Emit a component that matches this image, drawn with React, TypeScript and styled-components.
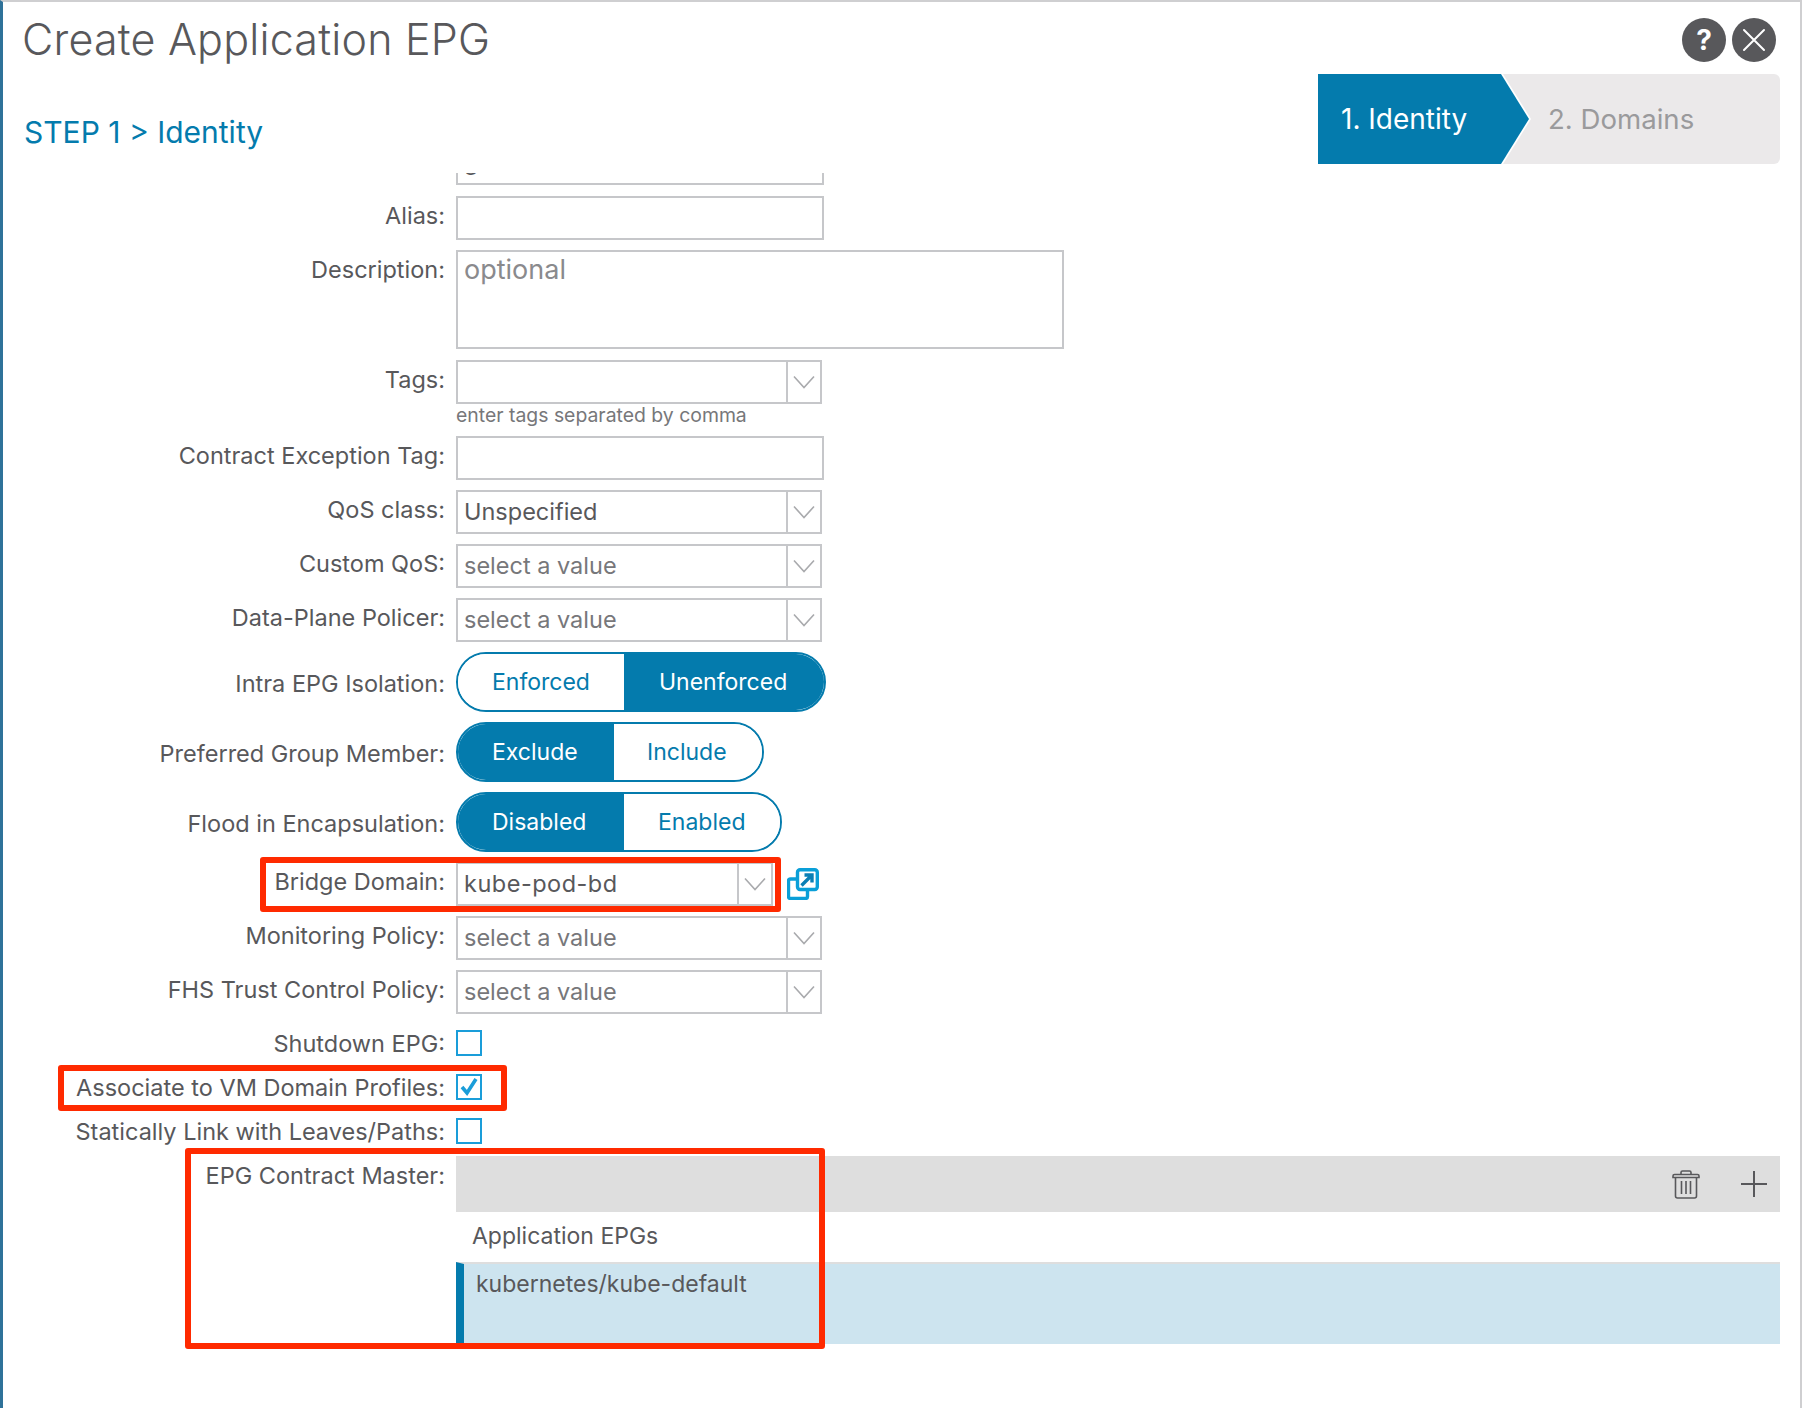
import React from "react";
import styled, { createGlobalStyle } from "styled-components";

const Global = createGlobalStyle`
  html, body { margin: 0; padding: 0; background: #fff; }
  body { font-family: Inter, "Liberation Sans", sans-serif; color: #58585b; }
  * { box-sizing: border-box; }
`;

const Dialog = styled.div`
  position: relative;
  width: 1802px;
  height: 1408px;
  overflow: hidden;
  background: #fff;
  border-top: 2px solid #cfcfd1;
  border-left: 3px solid #2f7299;
  border-right: 2px solid #cfcfd1;
`;

const Header = styled.header`
  display: flex;
  justify-content: space-between;
  height: 171px;
  padding-left: 19px;
`;

const HeadLeft = styled.div`
  display: flex;
  flex-direction: column;
`;

const Title = styled.h1`
  margin: 12px 0 0;
  font-size: 43px;
  line-height: 50px;
  font-weight: 300;
  color: #58585b;
  letter-spacing: 0.2px;
`;

const Step = styled.div`
  margin-top: 50px;
  margin-left: 2px;
  font-size: 30px;
  line-height: 36px;
  font-weight: 400;
  color: #047bad;
`;

const HeadRight = styled.div`
  display: flex;
  flex-direction: column;
  align-items: flex-end;
  width: 462px;
  margin-right: 20px;
  padding-top: 16px;
`;

const RoundButtons = styled.div`
  display: flex;
  gap: 6px;
  margin-right: 4px;
`;

const RoundButton = styled.div`
  display: flex;
  align-items: center;
  justify-content: center;
  width: 44px;
  height: 44px;
  border-radius: 50%;
  background: #58585b;
  color: #fff;
  font-size: 28px;
  font-weight: 700;
`;

const Wizard = styled.div`
  display: flex;
  width: 462px;
  height: 90px;
  margin-top: 12px;
  background: #ebe9ea;
  border-radius: 0 6px 6px 0;
`;

const ActiveEdge = styled.div`
  width: 213px;
  height: 90px;
  background: #fff;
  clip-path: polygon(0 0, 185px 0, 213px 50%, 185px 100%, 0 100%);
`;

const ActiveStep = styled.div`
  display: flex;
  align-items: center;
  width: 211px;
  height: 90px;
  padding-left: 23px;
  background: #047bad;
  color: #fff;
  font-size: 28px;
  clip-path: polygon(0 0, 183px 0, 211px 50%, 183px 100%, 0 100%);
`;

const NextStep = styled.div`
  display: flex;
  align-items: center;
  padding-left: 17px;
  color: #9a9a9c;
  font-size: 27.6px;
`;

const Form = styled.div`
  display: flex;
  flex-direction: column;
`;

const Clip = styled.div`
  display: flex;
  align-items: flex-end;
  height: 12px;
  overflow: hidden;
  padding-left: 453px;
`;

const Row = styled.div<{ $top?: number }>`
  display: flex;
  align-items: flex-start;
  margin-top: ${(p) => p.$top ?? 10}px;
`;

const Label = styled.div<{ $pad?: number }>`
  flex: none;
  width: 442px;
  margin-right: 11px;
  padding-top: ${(p) => p.$pad ?? 5}px;
  text-align: right;
  font-size: 23.5px;
  line-height: 30px;
  color: #58585b;
`;

const CheckLabel = styled(Label)`
  padding-top: 0;
  line-height: 28px;
`;

const Input = styled.div<{ $h?: number; $w?: number }>`
  flex: none;
  width: ${(p) => p.$w ?? 368}px;
  height: ${(p) => p.$h ?? 44}px;
  padding: 0 6px;
  border: 2px solid #c6c7ca;
  background: #fff;
  font-size: 23.5px;
  line-height: 38px;
  color: #58585b;
`;

const Placeholder = styled.span`
  color: #8a8a8d;
  font-size: 27px;
  line-height: 30px;
`;

const Select = styled.div<{ $w?: number }>`
  flex: none;
  display: flex;
  width: ${(p) => p.$w ?? 366}px;
  height: 44px;
  border: 2px solid #c6c7ca;
  background: #fff;
`;

const SelectValue = styled.div<{ $muted?: boolean; $track?: number }>`
  flex: 1;
  padding-left: 6px;
  font-size: 23.5px;
  line-height: 40px;
  letter-spacing: ${(p) => p.$track ?? 0}px;
  color: ${(p) => (p.$muted ? "#77777a" : "#58585b")};
`;

const Caret = styled.div`
  flex: none;
  display: flex;
  align-items: center;
  justify-content: center;
  width: 34px;
  border-left: 2px solid #c6c7ca;
`;

const Hint = styled.div`
  margin: 1px 0 0 453px;
  height: 21px;
  font-size: 19.4px;
  line-height: 21px;
  color: #77777a;
`;

const Toggle = styled.div`
  display: flex;
  height: 60px;
  border: 2px solid #047bad;
  border-radius: 30px;
  overflow: hidden;
`;

const ToggleOption = styled.div<{ $on?: boolean; $w: number; $pad: number }>`
  width: ${(p) => p.$w}px;
  padding-left: ${(p) => p.$pad}px;
  background: ${(p) => (p.$on ? "#047bad" : "#fff")};
  color: ${(p) => (p.$on ? "#fff" : "#047bad")};
  font-size: 23px;
  line-height: 56px;
`;

const LinkIcon = styled.svg`
  flex: none;
  margin: 6px 0 0 14px;
`;

const Check = styled.div`
  display: flex;
  align-items: center;
  justify-content: center;
  width: 26px;
  height: 26px;
  border: 2px solid #1a9dd9;
  background: #fff;
`;

const Master = styled.div`
  flex: none;
  width: 1324px;
`;

const Bar = styled.div`
  display: flex;
  align-items: center;
  justify-content: flex-end;
  gap: 41px;
  height: 56px;
  padding-right: 13px;
  background: #dedede;
`;

const ColumnHead = styled.div`
  height: 50px;
  padding-left: 16px;
  font-size: 23px;
  line-height: 48px;
  color: #58585b;
`;

const ListRow = styled.div`
  height: 82px;
  padding-left: 12px;
  border-top: 2px solid #dedede;
  border-left: 8px solid #047bad;
  background: #cde4ef;
  font-size: 23px;
  line-height: 40px;
  color: #58585b;
`;

const Mark = styled.div<{ $x: number; $y: number; $w: number; $h: number }>`
  position: absolute;
  left: ${(p) => p.$x - 3}px;
  top: ${(p) => p.$y - 2}px;
  width: ${(p) => p.$w}px;
  height: ${(p) => p.$h}px;
  border: 6px solid #ff2a00;
  border-radius: 3px;
  pointer-events: none;
`;

const Chevron = () => (
  <svg width="22" height="14" viewBox="0 0 22 14" fill="none">
    <path d="M1 1.5 L11 12.5 L21 1.5" stroke="#a9aaad" strokeWidth="1.6" />
  </svg>
);

const FieldSelect = ({ label, value, muted = true }: { label: string; value: string; muted?: boolean }) => (
  <Row>
    <Label>{label}</Label>
    <Select>
      <SelectValue $muted={muted}>{value}</SelectValue>
      <Caret>
        <Chevron />
      </Caret>
    </Select>
  </Row>
);

const App = () => (
  <Dialog>
    <Global />
    <Header>
      <HeadLeft>
        <Title>Create Application EPG</Title>
        <Step>STEP 1 &gt; Identity</Step>
      </HeadLeft>
      <HeadRight>
        <RoundButtons>
          <RoundButton>?</RoundButton>
          <RoundButton>
            <svg width="24" height="24" viewBox="0 0 24 24" fill="none">
              <path d="M2 2 L22 22 M22 2 L2 22" stroke="#fff" strokeWidth="2" strokeLinecap="round" />
            </svg>
          </RoundButton>
        </RoundButtons>
        <Wizard>
          <ActiveEdge>
            <ActiveStep>1. Identity</ActiveStep>
          </ActiveEdge>
          <NextStep>2. Domains</NextStep>
        </Wizard>
      </HeadRight>
    </Header>
    <Form>
      <Clip>
        <Input>g</Input>
      </Clip>
      <Row $top={11}>
        <Label>Alias:</Label>
        <Input />
      </Row>
      <Row>
        <Label>Description:</Label>
        <Input $w={608} $h={99}>
          <Placeholder>optional</Placeholder>
        </Input>
      </Row>
      <Row $top={11}>
        <Label>Tags:</Label>
        <Select>
          <SelectValue />
          <Caret>
            <Chevron />
          </Caret>
        </Select>
      </Row>
      <Hint>enter tags separated by comma</Hint>
      <Row>
        <Label>Contract Exception Tag:</Label>
        <Input />
      </Row>
      <FieldSelect label="QoS class:" value="Unspecified" muted={false} />
      <FieldSelect label="Custom QoS:" value="select a value" />
      <FieldSelect label="Data-Plane Policer:" value="select a value" />
      <Row>
        <Label $pad={17}>Intra EPG Isolation:</Label>
        <Toggle>
          <ToggleOption $w={166} $pad={34}>Enforced</ToggleOption>
          <ToggleOption $on $w={200} $pad={35}>Unenforced</ToggleOption>
        </Toggle>
      </Row>
      <Row>
        <Label $pad={17}>Preferred Group Member:</Label>
        <Toggle>
          <ToggleOption $on $w={156} $pad={34}>Exclude</ToggleOption>
          <ToggleOption $w={148} $pad={33}>Include</ToggleOption>
        </Toggle>
      </Row>
      <Row>
        <Label $pad={17}>Flood in Encapsulation:</Label>
        <Toggle>
          <ToggleOption $on $w={166} $pad={34}>Disabled</ToggleOption>
          <ToggleOption $w={156} $pad={34}>Enabled</ToggleOption>
        </Toggle>
      </Row>
      <Row>
        <Label>Bridge Domain:</Label>
        <Select $w={317}>
          <SelectValue $track={0.5}>kube-pod-bd</SelectValue>
          <Caret>
            <Chevron />
          </Caret>
        </Select>
        <LinkIcon width="32" height="32" viewBox="0 0 32 32" fill="none">
          <path d="M10 11 H3.5 Q1.5 11 1.5 13 V28.5 Q1.5 30.5 3.5 30.5 H18.5 Q20.5 30.5 20.5 28.5 V22" stroke="#0a9fd8" strokeWidth="3.4" />
          <rect x="10.5" y="1.7" width="19.8" height="19.8" rx="2.5" stroke="#0a9fd8" strokeWidth="3.4" />
          <path d="M14.5 17.5 L24.5 7.5 M17.5 7 H25 V14.5" stroke="#0b7fb5" strokeWidth="3.4" />
        </LinkIcon>
      </Row>
      <FieldSelect label="Monitoring Policy:" value="select a value" />
      <FieldSelect label="FHS Trust Control Policy:" value="select a value" />
      <Row $top={16}>
        <CheckLabel>Shutdown EPG:</CheckLabel>
        <Check />
      </Row>
      <Row $top={16}>
        <CheckLabel>Associate to VM Domain Profiles:</CheckLabel>
        <Check>
          <svg width="20" height="20" viewBox="0 0 20 20" fill="none">
            <path d="M3 10 L8 16 L17 2" stroke="#1a9dd9" strokeWidth="3.6" />
          </svg>
        </Check>
      </Row>
      <Row $top={16}>
        <CheckLabel>Statically Link with Leaves/Paths:</CheckLabel>
        <Check />
      </Row>
      <Row $top={10}>
        <Label>EPG Contract Master:</Label>
        <Master>
          <Bar>
            <svg width="28" height="29" viewBox="0 0 28 29" fill="none" stroke="#58585b" strokeWidth="1.6">
              <path d="M1 6 Q1 4.5 2.5 4.5 H25.5 Q27 4.5 27 6 V7.5 H1 Z" />
              <path d="M9 4.5 V2.5 Q9 1 10.5 1 H17.5 Q19 1 19 2.5 V4.5" />
              <path d="M3.5 7.5 V26 Q3.5 28 5.5 28 H22.5 Q24.5 28 24.5 26 V7.5" />
              <path d="M9.5 11 V24 M14 11 V24 M18.5 11 V24" />
            </svg>
            <svg width="26" height="26" viewBox="0 0 26 26" fill="none" stroke="#58585b" strokeWidth="2">
              <path d="M13 0 V26 M0 13 H26" />
            </svg>
          </Bar>
          <ColumnHead>Application EPGs</ColumnHead>
          <ListRow>kubernetes/kube-default</ListRow>
        </Master>
      </Row>
    </Form>
    <Mark $x={260} $y={857} $w={521} $h={55} />
    <Mark $x={58} $y={1065} $w={449} $h={46} />
    <Mark $x={185} $y={1148} $w={640} $h={201} />
  </Dialog>
);

export default App;
